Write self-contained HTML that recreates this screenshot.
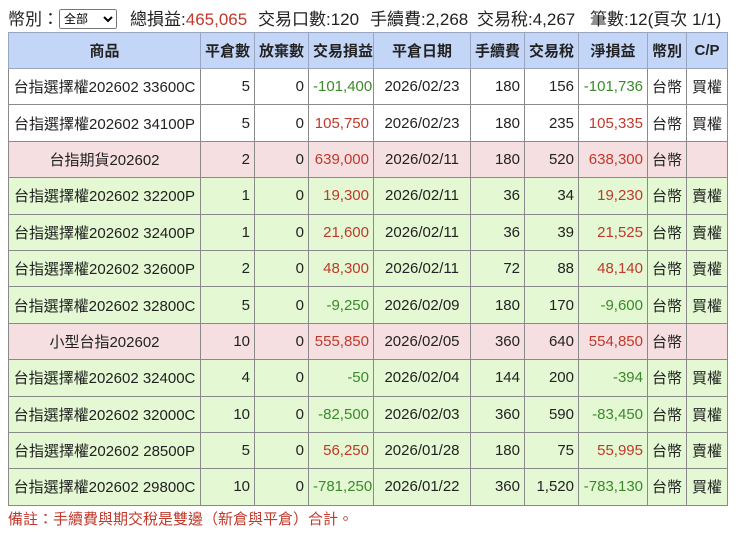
<!DOCTYPE html>
<html><head><meta charset="utf-8"><style>
body{margin:0;background:#fff;font-family:"Liberation Sans","Noto Sans CJK TC",sans-serif;color:#222;}
.top{position:absolute;top:8px;font-size:17px;white-space:nowrap;height:24px;line-height:24px}
select{font-size:12px;height:20px;width:58px;vertical-align:2px}
.r{color:#c0392b}
table{position:absolute;left:8px;top:32px;width:719px;border-collapse:collapse;table-layout:fixed;font-size:15px}
td,th{border:1px solid #8a8a8a;padding:0 4px;height:35.4px;white-space:nowrap;overflow:hidden}
th{background:#c4d6f7;font-weight:bold;height:35px;border-color:#9aa6c0}
td{text-align:right}
td.c{text-align:center}
td.n{padding:0 1px}
tr.p td{background:#f6dfe0}
tr.g td{background:#e3f8d3}
.red{color:#c0392b}.grn{color:#3a8a2a}
.note{position:absolute;left:8px;top:508px;font-size:15px;color:#c0392b}
</style></head><body>
<div class="top" style="left:8px">幣別：<select><option>全部</option></select></div>
<div class="top" style="left:130px">總損益:<span class="r">465,065</span></div>
<div class="top" style="left:258px">交易口數:120</div>
<div class="top" style="left:370px">手續費:2,268</div>
<div class="top" style="left:477px">交易稅:4,267</div>
<div class="top" style="left:590px">筆數:12(頁次 1/1)</div>
<table>
<colgroup><col style="width:192px"><col style="width:54px"><col style="width:54px"><col style="width:65px"><col style="width:97px"><col style="width:54px"><col style="width:54px"><col style="width:69px"><col style="width:39px"><col style="width:41px"></colgroup>
<tr><th>商品</th><th>平倉數</th><th>放棄數</th><th>交易損益</th><th>平倉日期</th><th>手續費</th><th>交易稅</th><th>淨損益</th><th>幣別</th><th>C/P</th></tr>
<tr><td class="c n">台指選擇權202602 33600C</td><td>5</td><td>0</td><td class="grn">-101,400</td><td class="c">2026/02/23</td><td>180</td><td>156</td><td class="grn">-101,736</td><td class="c n">台幣</td><td class="c n">買權</td></tr>
<tr><td class="c n">台指選擇權202602 34100P</td><td>5</td><td>0</td><td class="red">105,750</td><td class="c">2026/02/23</td><td>180</td><td>235</td><td class="red">105,335</td><td class="c n">台幣</td><td class="c n">買權</td></tr>
<tr class="p"><td class="c n">台指期貨202602</td><td>2</td><td>0</td><td class="red">639,000</td><td class="c">2026/02/11</td><td>180</td><td>520</td><td class="red">638,300</td><td class="c n">台幣</td><td class="c n"></td></tr>
<tr class="g"><td class="c n">台指選擇權202602 32200P</td><td>1</td><td>0</td><td class="red">19,300</td><td class="c">2026/02/11</td><td>36</td><td>34</td><td class="red">19,230</td><td class="c n">台幣</td><td class="c n">賣權</td></tr>
<tr class="g"><td class="c n">台指選擇權202602 32400P</td><td>1</td><td>0</td><td class="red">21,600</td><td class="c">2026/02/11</td><td>36</td><td>39</td><td class="red">21,525</td><td class="c n">台幣</td><td class="c n">賣權</td></tr>
<tr class="g"><td class="c n">台指選擇權202602 32600P</td><td>2</td><td>0</td><td class="red">48,300</td><td class="c">2026/02/11</td><td>72</td><td>88</td><td class="red">48,140</td><td class="c n">台幣</td><td class="c n">賣權</td></tr>
<tr class="g"><td class="c n">台指選擇權202602 32800C</td><td>5</td><td>0</td><td class="grn">-9,250</td><td class="c">2026/02/09</td><td>180</td><td>170</td><td class="grn">-9,600</td><td class="c n">台幣</td><td class="c n">買權</td></tr>
<tr class="p"><td class="c n">小型台指202602</td><td>10</td><td>0</td><td class="red">555,850</td><td class="c">2026/02/05</td><td>360</td><td>640</td><td class="red">554,850</td><td class="c n">台幣</td><td class="c n"></td></tr>
<tr class="g"><td class="c n">台指選擇權202602 32400C</td><td>4</td><td>0</td><td class="grn">-50</td><td class="c">2026/02/04</td><td>144</td><td>200</td><td class="grn">-394</td><td class="c n">台幣</td><td class="c n">買權</td></tr>
<tr class="g"><td class="c n">台指選擇權202602 32000C</td><td>10</td><td>0</td><td class="grn">-82,500</td><td class="c">2026/02/03</td><td>360</td><td>590</td><td class="grn">-83,450</td><td class="c n">台幣</td><td class="c n">買權</td></tr>
<tr class="g"><td class="c n">台指選擇權202602 28500P</td><td>5</td><td>0</td><td class="red">56,250</td><td class="c">2026/01/28</td><td>180</td><td>75</td><td class="red">55,995</td><td class="c n">台幣</td><td class="c n">賣權</td></tr>
<tr class="g"><td class="c n">台指選擇權202602 29800C</td><td>10</td><td>0</td><td class="grn">-781,250</td><td class="c">2026/01/22</td><td>360</td><td>1,520</td><td class="grn">-783,130</td><td class="c n">台幣</td><td class="c n">買權</td></tr>
</table>
<div class="note">備註：手續費與期交稅是雙邊（新倉與平倉）合計。</div>
</body></html>
